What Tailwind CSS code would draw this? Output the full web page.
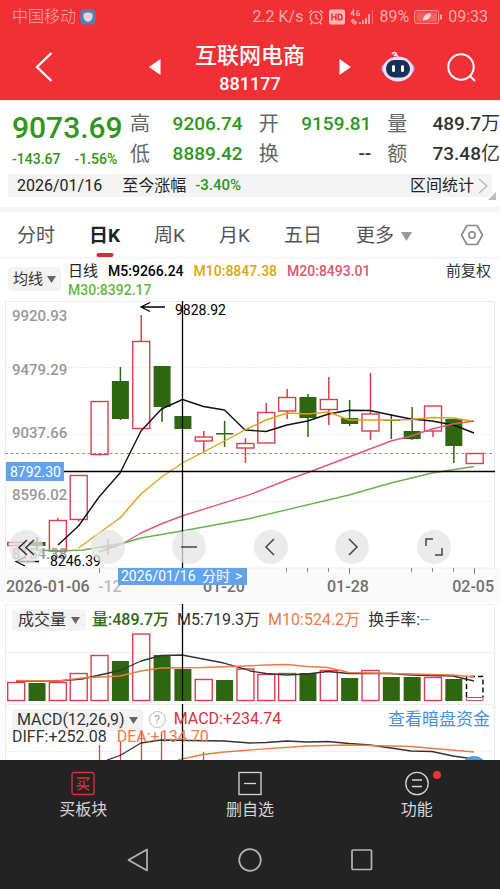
<!DOCTYPE html>
<html lang="zh-CN">
<head>
<meta charset="utf-8">
<meta name="viewport" content="width=device-width, initial-scale=1">
<title>互联网电商 881177</title>
<script src="https://cdn.jsdelivr.net/npm/@tailwindcss/browser@4"></script>
</head>
<body class="flex min-h-screen flex-col overflow-x-hidden bg-white text-[#333] [font-family:Roboto,'Noto_Sans_CJK_SC',sans-serif]">

<!-- Status bar and title -->
<header class="bg-[#f13035] text-white">
  <div class="flex h-[34px] items-center justify-between px-3 text-base text-[#ffaca8]">
    <div class="flex items-center gap-1 font-light">
      <span>中国移动</span>
      <svg class="size-4" viewBox="0 0 16 16" aria-hidden="true"><rect x="0.500" y="0.500" width="15" height="15" rx="4" fill="#3f87c0"/><path d="M8 3.200l4.500 1.300v3.500c0 2.500-2 4-4.500 5-2.500-1-4.500-2.500-4.500-5V4.500z" fill="#f7cdd0"/></svg>
    </div>
    <div class="flex items-center gap-[5px]">
      <span>2.2 K/s</span>
      <svg class="size-4" viewBox="0 0 16 16" fill="none" stroke="currentColor" stroke-width="1.300" aria-hidden="true"><circle cx="8" cy="8.500" r="5.800"/><path d="M8 5v4l2.500 1.500M1 4l3-2.800M15 4l-3-2.800M4 13.500l-1.500 1.700M12 13.500l1.500 1.700"/></svg>
      <svg class="h-4 w-4" viewBox="0 0 16 16" aria-hidden="true"><rect y="0.500" width="16" height="15" rx="2" fill="#ffb9b5"/><path d="M3 4.500v7M7 4.500v7M3 8h4M9.300 5.200v5.600h1.500c3 0 3-5.600 0-5.600z" fill="none" stroke="#f13035" stroke-width="1.500"/></svg>
      <svg class="h-4 w-6" viewBox="0 0 24 16" fill="none" stroke="currentColor" aria-hidden="true"><path d="M3.500 7V1L1 5h4M9.500 2H7v4.500h2.500V4.500H8.200" stroke-width="1.200"/><path d="M3 15v-4.500l-2 2M5 11v4l2-2" stroke-width="1.200"/><path d="M10 15v-2M13 15v-4M16 15V9M19 15V5" stroke-width="1.800"/><path d="M22.500 15V1" stroke-width="1" opacity=".5"/></svg>
      <span>89%</span>
      <svg class="h-4 w-[29px]" viewBox="0 0 29 16" fill="none" stroke="currentColor" aria-hidden="true"><rect x="0.700" y="1.700" width="24" height="12.600" rx="2"/><rect x="2.500" y="3.500" width="20.500" height="9" fill="#f8605f" stroke="none"/><path d="M27 5.500v5" stroke-width="2"/><path d="M9 12c0-5 3-8 8-8 0 5-3 7.500-7 7z" fill="#ffd6d2" stroke="none"/></svg>
      <span>09:33</span>
    </div>
  </div>
  <div class="grid h-[66px] grid-cols-[1fr_202px_1fr] items-center">
    <button class="ml-[35px] w-[18px]" aria-label="返回"><svg class="h-[30px] w-[18px]" viewBox="0 0 18 30" fill="none" stroke="#fff" stroke-width="2.400"><path d="M16.500 1L2 15l14.500 14"/></svg></button>
    <div class="flex items-center justify-between">
      <button aria-label="上一个"><svg class="h-4 w-3" viewBox="0 0 12 16" fill="#fff"><path d="M0 8L11.500 0v16z"/></svg></button>
      <h1 class="flex flex-col items-center pt-1 font-medium"><span class="text-[22px]/[30px]">互联网电商</span><span class="text-lg/[26px]">881177</span></h1>
      <button aria-label="下一个"><svg class="h-4 w-3" viewBox="0 0 12 16" fill="#fff"><path d="M12 8L0.500 0v16z"/></svg></button>
    </div>
    <div class="flex items-center justify-end gap-8 pr-6">
      <button aria-label="智能助手"><svg class="h-8 w-[34px]" viewBox="0 0 34 32"><path d="M11 3c1-2 4-2 4 0s-2 1.500-2 .5M15 3l2 3" fill="none" stroke="#f3eefc" stroke-width="1.500"/><ellipse cx="17" cy="17.500" rx="16.500" ry="9" fill="#b9a8f6"/><ellipse cx="17" cy="18" rx="15" ry="12.500" fill="#e4defc"/><rect x="5" y="9" width="24" height="17.500" rx="8.500" fill="#172f55"/><rect x="11" y="14" width="3" height="7" rx="1.500" fill="#fff"/><rect x="20" y="14" width="3" height="7" rx="1.500" fill="#fff"/></svg></button>
      <button aria-label="搜索"><svg class="size-[29px]" viewBox="0 0 29 29" fill="none" stroke="#fff" stroke-width="2"><circle cx="14" cy="14" r="12.700"/><path d="M22.500 22.500l5.500 5.500"/></svg></button>
    </div>
  </div>
</header>

<main class="flex flex-1 flex-col">
  <!-- Quote -->
  <section class="flex h-[74px] items-start border-t border-[#fde3dc] pt-2 pl-3 font-medium">
    <div class="w-[118px] shrink-0 text-[#2f9620]">
      <div class="text-[30px]/[38px]">9073.69</div>
      <div class="flex gap-[14px] text-sm/[24px] whitespace-nowrap"><span>-143.67</span><span>-1.56%</span></div>
    </div>
    <dl class="grid flex-1 grid-cols-3 gap-x-4 text-[19px]/[30px] whitespace-nowrap">
      <div class="flex justify-between"><dt class="text-xl/[30px] font-normal text-[#666]">高</dt><dd class="text-[#2f9620]">9206.74</dd></div>
      <div class="flex justify-between"><dt class="text-xl/[30px] font-normal text-[#666]">开</dt><dd class="text-[#2f9620]">9159.81</dd></div>
      <div class="flex justify-between"><dt class="text-xl/[30px] font-normal text-[#666]">量</dt><dd>489.7<span class="font-normal">万</span></dd></div>
      <div class="flex justify-between"><dt class="text-xl/[30px] font-normal text-[#666]">低</dt><dd class="text-[#2f9620]">8889.42</dd></div>
      <div class="flex justify-between"><dt class="text-xl/[30px] font-normal text-[#666]">换</dt><dd>--</dd></div>
      <div class="flex justify-between"><dt class="text-xl/[30px] font-normal text-[#666]">额</dt><dd>73.48<span class="font-normal">亿</span></dd></div>
    </dl>
  </section>
  <section class="relative mx-2 mb-[10px] flex h-[23px] items-center bg-[#f4f4f4] pl-[9px] text-base text-[#222]">
    <span>2026/01/16</span>
    <span class="ml-5">至今涨幅</span>
    <span class="ml-[9px] text-[15px] font-medium text-[#2f9620]">-3.40%</span>
    <button class="ml-auto flex items-center gap-1 pr-1"><span>区间统计</span><svg class="h-4 w-[10px]" viewBox="0 0 10 16" fill="none" stroke="#bbb" stroke-width="1.500"><path d="M1 1l8 7-8 7"/></svg></button>
    <svg class="absolute -right-1 -bottom-[3px] size-2" viewBox="0 0 8 8" fill="#bbb" aria-hidden="true"><path d="M8 0v8H0z"/></svg>
  </section>

  <!-- Period tabs -->
  <nav class="flex h-[51px] items-stretch gap-[34px] border-t-[5px] border-b border-t-[#f5f5f5] border-b-[#eee] pr-4 pl-[17px] text-[19px] whitespace-nowrap text-[#555]">
    <button class="pt-1">分时</button>
    <button class="relative pt-1 font-bold text-[#222]">日K<span class="absolute bottom-0 left-1/2 h-1 w-[17px] -translate-x-1/2 rounded-sm bg-[#cf3035]"></span></button>
    <button class="pt-1">周K</button>
    <button class="pt-1">月K</button>
    <button class="pt-1">五日</button>
    <button class="flex items-center gap-[7px] pt-1">更多<svg class="h-[9px] w-[11px]" viewBox="0 0 11 9" fill="#999"><path d="M0 0h11L5.500 9z"/></svg></button>
    <button class="ml-auto" aria-label="设置"><svg class="h-[22px] w-6" viewBox="0 0 24 22" fill="none" stroke="#888" stroke-width="1.600"><path d="M7 1.500h10L22.500 11 17 20.500H7L1.500 11z" stroke-linejoin="round"/><circle cx="12" cy="11" r="3.200"/></svg></button>
  </nav>

  <!-- Moving average legend -->
  <section class="flex h-[42px] items-start pr-[9px] pl-2 text-sm/[19px]">
    <button class="mt-[9px] flex h-6 items-center gap-1 rounded bg-[#f3f3f3] px-[5px] text-[15px] whitespace-nowrap">均线<svg class="h-[7px] w-[9px]" viewBox="0 0 9 7" fill="#666"><path d="M0 0h9L4.500 7z"/></svg></button>
    <div class="mt-1 ml-[7px] flex flex-1 flex-wrap gap-x-[10px] font-medium">
      <span class="text-[15px] font-normal text-[#222]">日线</span>
      <span class="text-black">M5:9266.24</span>
      <span class="text-[#e3a312]">M10:8847.38</span>
      <span class="text-[#e0566f]">M20:8493.01</span>
      <span class="basis-full text-[#64b644]">M30:8392.17</span>
    </div>
    <button class="mt-1 text-[15px]">前复权</button>
  </section>

  <!-- Candlesticks -->
  <section class="relative">
    <svg id="kline" class="block w-full" viewBox="0 300 500 302" role="img" aria-label="日K线图">
      <rect x="0" y="568" width="500" height="34" fill="#fafafa"/>
      <g fill="none" stroke="#ececec"><path d="M5 301.500h489.500v266.500H5.500V301.500"/><path d="M5 367.500h489M5 434.500h489M5 501.500h489" stroke-dasharray="2 1"/></g>
      <path d="M5 453.500h489" stroke="#8f9a70" stroke-dasharray="3 2.500"/>
      <g class="text-[15px] font-medium" fill="#999"><text x="12" y="321">9920.93</text><text x="12" y="375">9479.29</text><text x="12" y="438">9037.66</text><text x="12" y="500">8596.02</text><text x="12" y="559">8154.38</text></g>
      <g class="candles" fill="none"></g>
      <g fill="none" stroke-width="1.400" stroke-linejoin="round">
        <path stroke="#111" d="M58 545L78.500 526 99 497 120 473 141 431 161.500 409 182.500 399.500 203.500 406.500 224.500 410 245 430 266 431.500 287 425 307.500 421 328.500 414 349 410.300 370 410.500 391 415 411 419 432 421 453.500 425 474 433"/>
        <path stroke="#dea217" d="M78.500 548L120 518 141 494 161.500 477 182.500 463 203.500 452 224.500 441 245 430 266 420 287 413 307.500 414 328.500 412 349 420 391 420 411 419.500 432 417.500 453.500 418 474 421.500"/>
        <path stroke="#dd5a7c" d="M99 552L124 543 141 533 161 524 182 516 250 494.700 287 480 312 471 391 441 411 436 432 429 453 424 474 421"/>
        <path stroke="#68b24d" d="M36 550L58 551 83 550 124 543 141 538 182 531 250 518.500 349 495 391 483 432 473 474 466.500"/>
      </g>
      <g fill="none" stroke="#000" stroke-width="1.300"><path d="M165 307h-23M150 302.500l-9 4.500 9 4.500"/><path d="M39 561.500H17M25 557l-9 4.500 9 4.500"/></g>
      <g class="text-sm" fill="#000"><text x="175" y="315">9828.92</text><text x="50" y="566">8246.39</text></g>
      <path stroke="#888" d="M99.500 568v5M286.500 568v4M307.500 568v4M328.500 568v4M349.500 568v6M411.500 568v4M432.500 568v4M453.500 568v4M474.500 568v6"/>
      <g class="text-base font-medium" fill="#707070"><text x="6" y="592">2026-01-06</text><text x="98" y="592" fill="#bbb">-12</text><text x="203" y="592">01-20</text><text x="327" y="592">01-28</text><text x="494" y="592" text-anchor="end">02-05</text></g>
      <path stroke="#000" stroke-width="1.300" d="M182.500 301v267M6 471.500h489"/>
      <g fill="#62a3ec"><rect x="6" y="462" width="58" height="19"/><rect x="118" y="568" width="129" height="17"/></g>
      <g class="text-sm" fill="#fff"><text x="10" y="477">8792.30</text><text x="121" y="581">2026/01/16</text><text x="202" y="581">分时</text><text x="235" y="581">&gt;</text></g>
    </svg>
    <div class="absolute right-[49px] bottom-[38px] left-[9px] flex justify-between">
      <button class="size-[34px] rounded-full bg-[#e4e4e4]/75" aria-label="最早"><svg viewBox="0 0 34 34" fill="none" stroke="#333" stroke-width="1.500"><path d="M18 10l-8 7.500 8 7.500M25 10l-8 7.500 8 7.500"/></svg></button>
      <button class="size-[34px] rounded-full bg-[#e4e4e4]/75" aria-label="放大"><svg viewBox="0 0 34 34" fill="none" stroke="#ccc" stroke-width="1.500"><path d="M9 17h16M17 9v16"/></svg></button>
      <button class="size-[34px] rounded-full bg-[#e4e4e4]/75" aria-label="缩小"><svg viewBox="0 0 34 34" fill="none" stroke="#444" stroke-width="1.500"><path d="M9 17h16"/></svg></button>
      <button class="size-[34px] rounded-full bg-[#e4e4e4]/75" aria-label="左移"><svg viewBox="0 0 34 34" fill="none" stroke="#444" stroke-width="1.500"><path d="M20 9l-8 8 8 8"/></svg></button>
      <button class="size-[34px] rounded-full bg-[#e4e4e4]/75" aria-label="右移"><svg viewBox="0 0 34 34" fill="none" stroke="#444" stroke-width="1.500"><path d="M14 9l8 8-8 8"/></svg></button>
      <button class="size-[34px] rounded-full bg-[#e4e4e4]/75" aria-label="全屏"><svg viewBox="0 0 34 34" fill="none" stroke="#444" stroke-width="1.500"><path d="M9 16V9h7M25 18v7h-7"/></svg></button>
    </div>
  </section>

  <!-- Volume -->
  <section class="relative">
    <svg id="volume" class="block w-full" viewBox="0 602 500 102" role="img" aria-label="成交量图">
      <path d="M5.500 704V604.500h489V704M5 652.500h489" fill="none" stroke="#ececec"/>
      <g class="bars" fill="none"></g>
      <path d="M466.500 697.500h16.500v3h-16.500z" fill="none" stroke="#d84a58"/>
      <path d="M466.500 697V676.500H483V697" fill="none" stroke="#000" stroke-width="1.400" stroke-dasharray="5 3"/>
      <g fill="none" stroke-width="1.300" stroke-linejoin="round">
        <path stroke="#333" d="M16 681h42l24-2 38-8.500 21-9.500 20-5.500 21-.5 21 4 21 4 21 6 5 2 16 2.500 21 1.500 20-1 21-2.500 21 2h42l20 1.500 42 1 21 5"/>
        <path stroke="#ee7a45" d="M16 680.500l42 .5 24-3 38-2 21-5 20-3 42-.5 42-1.500 21-1 21-.5 20 2 21 1 21 5 21 .5 83 2 21 2"/>
      </g>
      <path stroke="#000" stroke-width="1.300" d="M182.500 604v97"/>
    </svg>
    <div class="absolute top-[7px] left-3 flex items-center text-base/[22px] whitespace-nowrap">
      <button class="flex h-[22px] items-center gap-[5px] rounded-sm bg-[#f3f3f3] px-[6px]">成交量<svg class="h-[7px] w-[9px]" viewBox="0 0 9 7" fill="#666"><path d="M0 0h9L4.500 7z"/></svg></button>
      <span class="ml-[6px] font-medium text-[#2f6a14]">量:489.7万</span>
      <span class="ml-2">M5:719.3万</span>
      <span class="ml-2 text-[#ee7a45]">M10:524.2万</span>
      <span class="ml-2">换手率:<span class="text-[#2eb3c5]">--</span></span>
    </div>
  </section>

  <!-- MACD -->
  <section class="relative h-14 overflow-hidden">
    <svg class="block w-full" viewBox="0 704 500 56" role="img" aria-label="MACD图">
      <path d="M5.500 760V704.500h489V760" fill="none" stroke="#ececec"/><path d="M5 751.500h489" stroke="#ececec" stroke-dasharray="2 1"/>
      <path d="M99.500 745v15M120.500 741v19M141.500 730v30M161.500 733v27M203.500 752v8" stroke="#d5414c" stroke-width="1.300"/>
      <g fill="none" stroke-width="1.300" stroke-linejoin="round">
        <path stroke="#333" d="M107 760L120 755.500 141 743 161 740 224 741 250 743 266 742.500 287 741 307 742 328 741.500 349 743.500 370 745 391 748 411 751 432 751.500 453 756 474 759"/>
        <path stroke="#ee7a45" d="M178 760L203 754.500 224 752 250 750 307 746 349 745 391 746 411 746.500 474 752"/>
      </g>
      <circle cx="474" cy="769" r="13" fill="#4b9ee8"/>
      <path stroke="#000" stroke-width="1.300" d="M182.500 704v56"/>
    </svg>
    <div class="absolute top-[5px] right-[10px] left-3 flex items-start text-base/[20px] whitespace-nowrap">
      <button class="flex h-[22px] items-center gap-1 rounded-sm bg-[#f3f3f3] px-[5px]">MACD(12,26,9)<svg class="h-[7px] w-[9px]" viewBox="0 0 9 7" fill="#666"><path d="M0 0h9L4.500 7z"/></svg></button>
      <button class="mt-[2px] ml-[6px] size-[17px] rounded-full border border-[#bbb] text-[13px]/[15px] text-[#aaa]" aria-label="指标说明">?</button>
      <span class="ml-2 text-[#d5303d]">MACD:+234.74</span>
      <a href="#" class="ml-auto text-[17px] text-[#4a90dd]">查看暗盘资金</a>
    </div>
    <div class="absolute top-[23px] left-3 flex gap-[10px] text-base/[20px] whitespace-nowrap"><span>DIFF:+252.08</span><span class="text-[#ee7a45]">DEA:+134.70</span></div>
  </section>
</main>

<!-- Actions and system keys -->
<footer class="bg-[#232323] text-[#d6d6d6]">
  <nav class="grid h-[70px] grid-cols-3 pt-[10px] text-base/[24px]">
    <button class="flex flex-col items-center gap-[2px]"><svg class="size-[26px]" viewBox="0 0 26 26" fill="none" stroke="#e0303f" stroke-width="1.300"><rect x="2" y="2.500" width="22" height="22" rx="2"/><path d="M7 8h12l-2 3M9 10.500l3 1.500M8 13l3 1.500M6.500 16h13M14 10v4c0 3-3 5-6.500 6M14 17l5 3.500"/></svg>买板块</button>
    <button class="flex flex-col items-center gap-[2px]"><svg class="size-[26px]" viewBox="0 0 26 26" fill="none" stroke="currentColor" stroke-width="1.300"><rect x="2" y="2.500" width="22" height="22"/><path d="M7 13.500h12"/></svg>删自选</button>
    <button class="flex flex-col items-center gap-[2px]"><span class="relative"><svg class="size-[26px]" viewBox="0 0 26 26" fill="none" stroke="currentColor" stroke-width="1.300"><circle cx="13" cy="13.500" r="11.200"/><path d="M8 10h10M8 16.500h10"/></svg><span class="absolute top-[1px] -right-[11px] size-2 rounded-full bg-[#f13035]"></span></span>功能</button>
  </nav>
  <div class="flex h-[59px] items-center justify-center gap-[88px]">
    <button aria-label="返回键"><svg class="size-6" viewBox="0 0 24 24" fill="none" stroke="#b5b5b5" stroke-width="1.700" stroke-linejoin="round"><path d="M2.500 12L21 1.500v21z"/></svg></button>
    <button aria-label="主页键"><svg class="size-6" viewBox="0 0 24 24" fill="none" stroke="#b5b5b5" stroke-width="1.700"><circle cx="12" cy="12" r="10.800"/></svg></button>
    <button aria-label="最近任务"><svg class="size-6" viewBox="0 0 24 24" fill="none" stroke="#b5b5b5" stroke-width="1.700"><rect x="2" y="2" width="19.500" height="19.500" rx="1"/></svg></button>
  </div>
</footer>

<script>
  // One row per day: rising?, body top, body bottom, wick top, wick bottom, volume top
  const days = [
    [1,542.5,545.5,542,546,682.5],[0,542,546,537,550,683],[1,520.5,551,518,551,682.5],[1,475.5,519.5,475,521.5,673.5],
    [1,401.5,454.5,401,455.5,655.5],[0,381,419,367,420,661],[1,341.5,428.5,315,429,634],[0,366,407,366,422,655],
    [0,416,429,416,429,669],[1,437,441,431,452,679.5],[0,433,434.5,421,447,680],[1,443.5,448,438,463,669],
    [1,412.5,443,403,443,674.5],[1,397.5,411,389,419,673.5],[0,397,418,394,437,673],[1,399.5,409.5,377,425,670.5],
    [0,418,424,400,426,678],[1,414,431,373,440,670.5],[0,420,421,414,439,677],[0,431,439,407,440,677],
    [1,406,431,406,437,677.5],[0,419,446,419,463,679],[1,453.5,463.5,453.5,463.5,null]
  ];
  const red = '#d6404e', green = '#2f6611';
  let candles = '', bars = '';
  days.forEach(([up, top, bottom, high, low, vol], i) => {
    const x = 15.7 + 20.84 * i, color = up ? red : green;
    const box = (a, b) => up
      ? `<rect x="${x - 8}" y="${a}" width="17" height="${b - a}" stroke="${red}" stroke-width="1.4"/>`
      : `<rect x="${x - 8}" y="${a}" width="17" height="${b - a}" fill="${green}"/>`;
    candles += `<path d="M${x + .5} ${high}V${top}M${x + .5} ${bottom}V${low}" stroke="${color}" stroke-width="1.5"/>` + box(top, bottom);
    if (vol) bars += box(vol, up ? 700.5 : 701);
  });
  document.querySelector('#kline .candles').innerHTML = candles;
  document.querySelector('#volume .bars').innerHTML = bars;
</script>
</body>
</html>
